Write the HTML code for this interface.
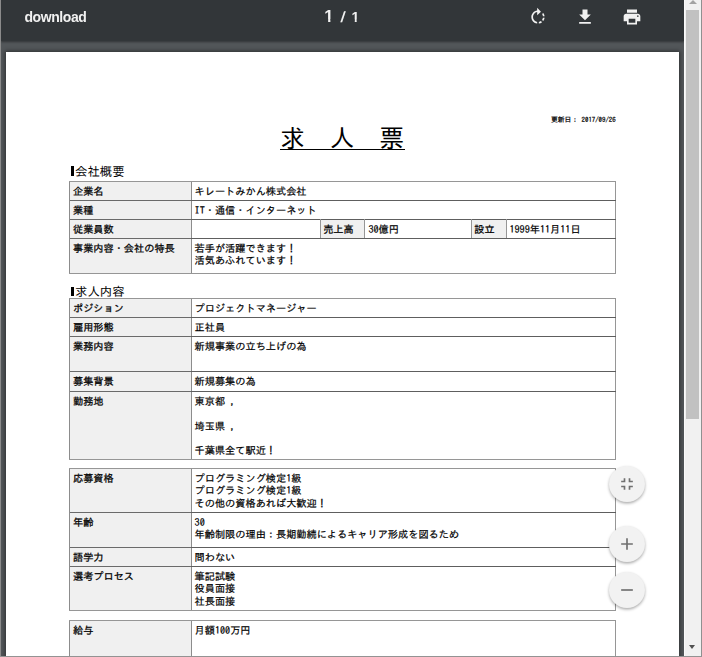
<!DOCTYPE html>
<html lang="ja">
<head>
<meta charset="utf-8">
<title>download</title>
<style>
html,body{margin:0;padding:0;}
body{width:702px;height:657px;overflow:hidden;background:#525659;position:relative;font-family:"Liberation Sans","IPAGothic","Noto Sans CJK JP",sans-serif;}
#edge{position:absolute;left:0;top:0;width:1px;height:657px;background:#8b8b8b;z-index:20;}
#toolbar{will-change:transform;position:absolute;left:1px;top:0;width:683px;height:41px;background:#323639;z-index:10;box-shadow:0 1px 2px rgba(0,0,0,0.4);color:#f1f1f1;}
#title{position:absolute;left:23.4px;top:9px;font-size:14px;font-weight:bold;line-height:16px;letter-spacing:-0.4px;}
#pageno span{position:absolute;line-height:18px;font-weight:bold;}
#pageno .a{left:323.3px;top:6.5px;font-size:16.5px;clip-path:polygon(0 0,100% 0,100% 12.7px,0.3706em 12.7px,0.3706em 100%,0.2334em 100%,0.2334em 12.7px,0 12.7px);}
#pageno .s{left:339.5px;top:7.5px;font-size:15px;transform:skewX(-8deg);}
#pageno .b{left:350.5px;top:7.5px;font-size:14px;clip-path:polygon(0 0,100% 0,100% 12.1px,0.3706em 12.1px,0.3706em 100%,0.2334em 100%,0.2334em 12.1px,0 12.1px);}
.tbicon{position:absolute;top:7px;width:20px;height:20px;fill:#f1f1f1;}
#page{position:absolute;left:6px;top:52px;width:673px;height:620px;background:#fff;box-shadow:0 0 4px 1px rgba(0,0,0,0.45);}
#doc{position:absolute;left:0;top:0;width:684px;height:657px;overflow:hidden;font-family:"IPAGothic","Noto Sans CJK JP",sans-serif;color:#000;}
#doc div{position:absolute;}
.date{font-size:6.8px;line-height:8px;-webkit-text-stroke:0.22px #000;white-space:pre;}
.h1{font-size:24.9px;line-height:28px;white-space:pre;}
.h2{font-size:12.4px;line-height:14px;white-space:pre;}
.lab{background:#f0f0f0;}
.t{font-size:10.18px;line-height:12.21px;font-weight:normal;-webkit-text-stroke:0.2px #000;white-space:pre;}
#doc .tl{-webkit-text-stroke:0.26px #000;}
#sb{position:absolute;left:684px;top:0;width:17px;height:657px;background:#f1f1f1;z-index:30;border-left:1px solid #fafafa;box-sizing:border-box;}
#redge{position:absolute;left:701px;top:0;width:1px;height:657px;background:#909090;z-index:40;}
#bedge{position:absolute;left:0;top:656px;width:702px;height:1px;background:#939393;z-index:41;}
#sbthumb{position:absolute;left:1px;top:10px;width:13px;height:409px;background:#c1c1c1;}
.arr{position:absolute;left:4px;width:0;height:0;border-left:4px solid transparent;border-right:4px solid transparent;}
.fab{position:absolute;left:609px;width:36px;height:36px;border-radius:50%;background:#f2f2f2;box-shadow:0 1.5px 3px rgba(0,0,0,0.33);z-index:15;}
.fab svg{position:absolute;left:8px;top:8px;width:20px;height:20px;fill:#707070;}
</style>
</head>
<body>
<div id="edge"></div><div id="redge"></div><div id="bedge"></div>
<div id="toolbar">
  <div id="title">download</div>
  <div id="pageno"><span class="a">1</span><span class="s">/</span><span class="b">1</span></div>
  <svg class="tbicon" style="left:527px" viewBox="0 0 24 24"><path d="M15.55 5.55L11 1v3.07C7.06 4.56 4 7.92 4 12s3.05 7.44 7 7.93v-2.02c-2.84-.48-5-2.94-5-5.91s2.16-5.43 5-5.91V10l4.55-4.45zM19.93 11c-.17-1.39-.72-2.73-1.62-3.89l-1.42 1.42c.54.75.88 1.6 1.02 2.47h2.02zM13 17.9v2.02c1.39-.17 2.74-.71 3.9-1.61l-1.44-1.44c-.75.54-1.59.89-2.46 1.03zm3.89-2.42l1.42 1.41c.9-1.16 1.45-2.5 1.62-3.89h-2.02c-.14.87-.48 1.72-1.02 2.48z"/></svg>
  <svg class="tbicon" style="left:574px" viewBox="0 0 24 24"><path d="M19 9h-4V3H9v6H5l7 7 7-7zM5 18v2h14v-2H5z"/></svg>
  <svg class="tbicon" style="left:621px" viewBox="0 0 24 24"><path d="M19 8H5c-1.66 0-3 1.34-3 3v6h4v4h12v-4h4v-6c0-1.66-1.34-3-3-3zm-3 11H8v-5h8v5zm3-7c-.55 0-1-.45-1-1s.45-1 1-1 1 .45 1 1-.45 1-1 1zm-1-9H6v4h12V3z"/></svg>
</div>
<div id="page"></div>
<div id="doc">
<div class="date" style="left:551px;top:115.5px">更新日： 2017/09/26</div>
<div class="h1" style="left:280px;top:124.4px">求　人　票</div>
<div style="left:280px;top:149px;width:125px;height:1px;background:#000"></div>
<div style="left:71px;top:166px;width:3px;height:10px;background:#000"></div>
<div class="h2" style="left:75px;top:163.5px">会社概要</div>
<div style="left:71px;top:287px;width:3px;height:9px;background:#000"></div>
<div class="h2" style="left:75px;top:284.4px">求人内容</div>
<div class="lab" style="left:70px;top:182px;width:121px;height:91px"></div>
<div class="ln" style="left:69px;top:181px;width:1px;height:92px;background:#8c8c8c"></div>
<div class="ln" style="left:191px;top:181px;width:1px;height:92px;background:#8c8c8c"></div>
<div class="ln" style="left:615px;top:181px;width:1px;height:93px;background:#969696"></div>
<div class="ln" style="left:69px;top:181px;width:547px;height:1px;background:#969696"></div>
<div class="t tl" style="left:73px;top:185.2px">企業名</div>
<div class="t" style="left:194.6px;top:185.2px">キレートみかん株式会社</div>
<div class="ln" style="left:70px;top:200px;width:121px;height:1px;background:#6a6a6a"></div>
<div class="ln" style="left:191px;top:200px;width:425px;height:1px;background:#5e5e5e"></div>
<div class="t tl" style="left:73px;top:204.2px">業種</div>
<div class="t" style="left:194.6px;top:204.2px">IT・通信・インターネット</div>
<div class="ln" style="left:70px;top:219px;width:121px;height:1px;background:#6a6a6a"></div>
<div class="ln" style="left:191px;top:219px;width:425px;height:1px;background:#5e5e5e"></div>
<div class="t tl" style="left:73px;top:223.2px">従業員数</div>
<div class="t" style="left:194.6px;top:223.2px"></div>
<div class="ln" style="left:70px;top:238px;width:121px;height:1px;background:#6a6a6a"></div>
<div class="ln" style="left:191px;top:238px;width:425px;height:1px;background:#5e5e5e"></div>
<div class="t tl" style="left:73px;top:242.2px">事業内容・会社の特長</div>
<div class="t" style="left:194.6px;top:242.2px">若手が活躍できます！<br>活気あふれています！</div>
<div class="ln" style="left:69px;top:273px;width:547px;height:1px;background:#969696"></div>
<div class="lab" style="left:321px;top:220px;width:43px;height:18px"></div>
<div class="lab" style="left:472px;top:220px;width:34px;height:18px"></div>
<div class="ln" style="left:320px;top:219px;width:1px;height:19px;background:#969696"></div>
<div class="ln" style="left:364px;top:219px;width:1px;height:19px;background:#969696"></div>
<div class="ln" style="left:471px;top:219px;width:1px;height:19px;background:#969696"></div>
<div class="ln" style="left:506px;top:219px;width:1px;height:19px;background:#969696"></div>
<div class="t tl" style="left:323.2px;top:223.2px">売上高</div>
<div class="t" style="left:368.4px;top:223.2px">30億円</div>
<div class="t tl" style="left:474.3px;top:223.2px">設立</div>
<div class="t" style="left:509.4px;top:223.2px">1999年11月11日</div>
<div class="lab" style="left:70px;top:299px;width:121px;height:160px"></div>
<div class="ln" style="left:69px;top:298px;width:1px;height:161px;background:#8c8c8c"></div>
<div class="ln" style="left:191px;top:298px;width:1px;height:161px;background:#8c8c8c"></div>
<div class="ln" style="left:615px;top:298px;width:1px;height:162px;background:#969696"></div>
<div class="ln" style="left:69px;top:298px;width:547px;height:1px;background:#969696"></div>
<div class="t tl" style="left:73px;top:302.2px">ポジション</div>
<div class="t" style="left:194.6px;top:302.2px">プロジェクトマネージャー</div>
<div class="ln" style="left:70px;top:317px;width:121px;height:1px;background:#6a6a6a"></div>
<div class="ln" style="left:191px;top:317px;width:425px;height:1px;background:#5e5e5e"></div>
<div class="t tl" style="left:73px;top:321.2px">雇用形態</div>
<div class="t" style="left:194.6px;top:321.2px">正社員</div>
<div class="ln" style="left:70px;top:336px;width:121px;height:1px;background:#6a6a6a"></div>
<div class="ln" style="left:191px;top:336px;width:425px;height:1px;background:#5e5e5e"></div>
<div class="t tl" style="left:73px;top:340.2px">業務内容</div>
<div class="t" style="left:194.6px;top:340.2px">新規事業の立ち上げの為</div>
<div class="ln" style="left:70px;top:371px;width:121px;height:1px;background:#6a6a6a"></div>
<div class="ln" style="left:191px;top:371px;width:425px;height:1px;background:#5e5e5e"></div>
<div class="t tl" style="left:73px;top:375.2px">募集背景</div>
<div class="t" style="left:194.6px;top:375.2px">新規募集の為</div>
<div class="ln" style="left:70px;top:391px;width:121px;height:1px;background:#6a6a6a"></div>
<div class="ln" style="left:191px;top:391px;width:425px;height:1px;background:#5e5e5e"></div>
<div class="t tl" style="left:73px;top:395.2px">勤務地</div>
<div class="t" style="left:194.6px;top:395.2px">東京都 ，<br><br>埼玉県 ，<br><br>千葉県全て駅近！</div>
<div class="ln" style="left:69px;top:459px;width:547px;height:1px;background:#969696"></div>
<div class="lab" style="left:70px;top:469px;width:121px;height:141px"></div>
<div class="ln" style="left:69px;top:468px;width:1px;height:142px;background:#8c8c8c"></div>
<div class="ln" style="left:191px;top:468px;width:1px;height:142px;background:#8c8c8c"></div>
<div class="ln" style="left:615px;top:468px;width:1px;height:143px;background:#969696"></div>
<div class="ln" style="left:69px;top:468px;width:547px;height:1px;background:#969696"></div>
<div class="t tl" style="left:73px;top:472.2px">応募資格</div>
<div class="t" style="left:194.6px;top:472.2px">プログラミング検定1級<br>プログラミング検定1級<br>その他の資格あれば大歓迎！</div>
<div class="ln" style="left:70px;top:512px;width:121px;height:1px;background:#6a6a6a"></div>
<div class="ln" style="left:191px;top:512px;width:425px;height:1px;background:#5e5e5e"></div>
<div class="t tl" style="left:73px;top:516.2px">年齢</div>
<div class="t" style="left:194.6px;top:516.2px">30<br>年齢制限の理由：長期勤続によるキャリア形成を図るため</div>
<div class="ln" style="left:70px;top:547px;width:121px;height:1px;background:#6a6a6a"></div>
<div class="ln" style="left:191px;top:547px;width:425px;height:1px;background:#5e5e5e"></div>
<div class="t tl" style="left:73px;top:551.2px">語学力</div>
<div class="t" style="left:194.6px;top:551.2px">問わない</div>
<div class="ln" style="left:70px;top:566px;width:121px;height:1px;background:#6a6a6a"></div>
<div class="ln" style="left:191px;top:566px;width:425px;height:1px;background:#5e5e5e"></div>
<div class="t tl" style="left:73px;top:570.2px">選考プロセス</div>
<div class="t" style="left:194.6px;top:570.2px">筆記試験<br>役員面接<br>社長面接</div>
<div class="ln" style="left:69px;top:610px;width:547px;height:1px;background:#969696"></div>
<div class="lab" style="left:70px;top:621px;width:121px;height:39px"></div>
<div class="ln" style="left:69px;top:620px;width:1px;height:40px;background:#8c8c8c"></div>
<div class="ln" style="left:191px;top:620px;width:1px;height:40px;background:#8c8c8c"></div>
<div class="ln" style="left:615px;top:620px;width:1px;height:41px;background:#969696"></div>
<div class="ln" style="left:69px;top:620px;width:547px;height:1px;background:#969696"></div>
<div class="t tl" style="left:73px;top:624.2px">給与</div>
<div class="t" style="left:194.6px;top:624.2px">月額100万円</div>
<div class="ln" style="left:69px;top:660px;width:547px;height:1px;background:#969696"></div>
</div>
<div id="sb"><div class="arr" style="top:-0.5px;left:3.7px;border-bottom:4.5px solid #a3a3a3"></div><div id="sbthumb"></div><div class="arr" style="top:645px;left:3.9px;border-left-width:3.7px;border-right-width:3.7px;border-top:4.2px solid #505050"></div></div>
<div class="fab" style="top:466px"><svg viewBox="0 0 24 24"><path d="M5 16h3v3h2v-5H5v2zm3-8H5v2h5V5H8v3zm6 11h2v-3h3v-2h-5v5zm2-11V5h-2v5h5V8h-3z"/></svg></div>
<div class="fab" style="top:526px"><svg viewBox="0 0 24 24"><path d="M19 13h-6v6h-2v-6H5v-2h6V5h2v6h6v2z"/></svg></div>
<div class="fab" style="top:572px"><svg viewBox="0 0 24 24"><path d="M19 13H5v-2h14v2z"/></svg></div>
</body>
</html>
